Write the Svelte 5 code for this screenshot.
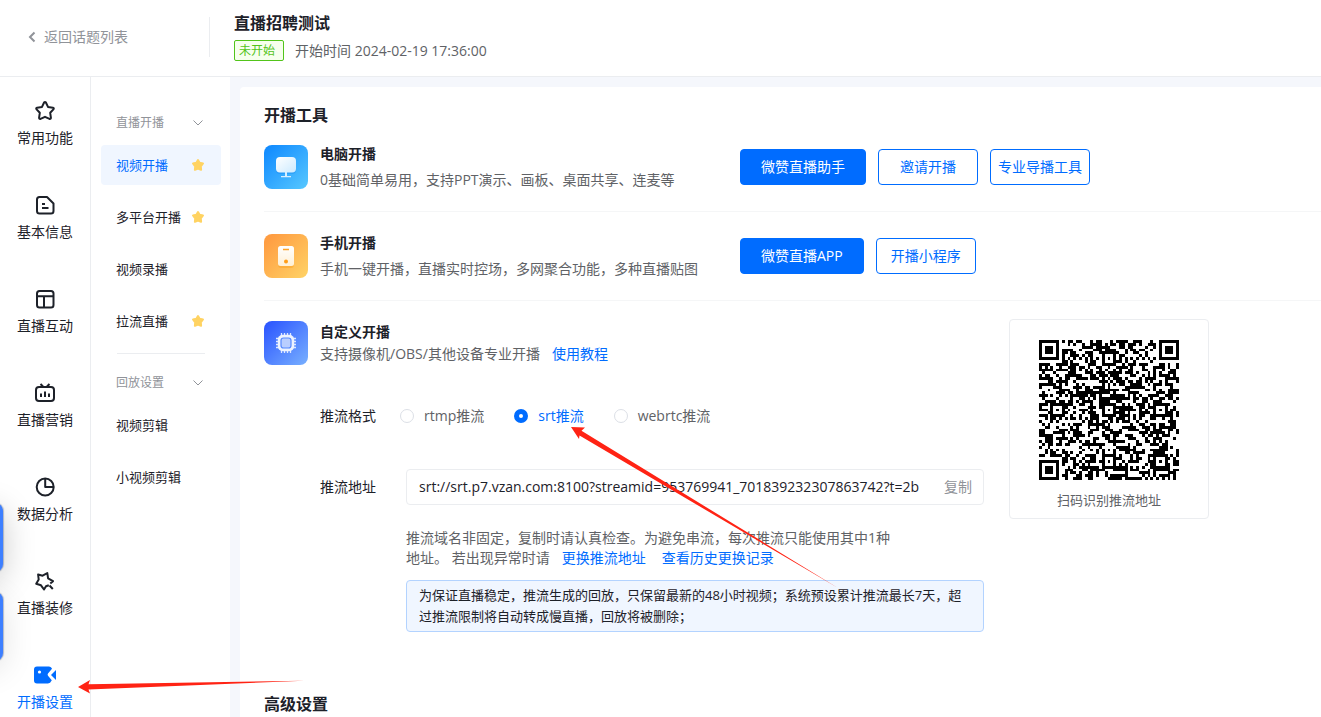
<script>
  const mainNav = [
    { label: '常用功能', icon: 'star' },
    { label: '基本信息', icon: 'doc' },
    { label: '直播互动', icon: 'layout' },
    { label: '直播营销', icon: 'chart' },
    { label: '数据分析', icon: 'pie' },
    { label: '直播装修', icon: 'magic' },
    { label: '开播设置', icon: 'camera', active: true }
  ];

  const groups = [
    {
      title: '直播开播',
      items: [
        { label: '视频开播', star: true, active: true },
        { label: '多平台开播', star: true },
        { label: '视频录播' },
        { label: '拉流直播', star: true }
      ]
    },
    { title: '回放设置', items: [{ label: '视频剪辑' }, { label: '小视频剪辑' }] }
  ];

  const formats = [
    { value: 'rtmp', label: 'rtmp推流' },
    { value: 'srt', label: 'srt推流' },
    { value: 'webrtc', label: 'webrtc推流' }
  ];

  let format = $state('srt');
  let address = $state('srt://srt.p7.vzan.com:8100?streamid=953769941_701839232307863742?t=2b');

  const QR_SIZE = 49;

  // Builds the module grid: finder, timing and alignment patterns over a seeded data area.
  function buildQr(size) {
    let seed = 20240219;
    const rand = () => {
      seed = (seed * 1664525 + 1013904223) >>> 0;
      return seed / 4294967296;
    };
    const grid = Array.from({ length: size }, () => Array.from({ length: size }, () => rand() < 0.5));
    const ring = (cx, cy, reach, light) => {
      for (let y = -reach; y <= reach; y++) {
        for (let x = -reach; x <= reach; x++) {
          const row = grid[cy + y];
          if (row && cx + x >= 0 && cx + x < size) {
            row[cx + x] = !light.includes(Math.max(Math.abs(x), Math.abs(y)));
          }
        }
      }
    };
    for (let i = 8; i < size - 8; i++) {
      grid[6][i] = i % 2 === 0;
      grid[i][6] = i % 2 === 0;
    }
    for (const [x, y] of [[24, 6], [6, 24], [24, 24], [42, 24], [24, 42], [42, 42]]) ring(x, y, 2, [1]);
    for (const [x, y] of [[3, 3], [size - 4, 3], [3, size - 4]]) ring(x, y, 4, [2, 4]);
    let d = '';
    grid.forEach((row, y) => {
      let x = 0;
      while (x < size) {
        if (!row[x]) { x++; continue; }
        const start = x;
        while (x < size && row[x]) x++;
        d += `M${start} ${y}h${x - start}v1h${start - x}z`;
      }
    });
    return d;
  }

  const qrPath = buildQr(QR_SIZE);
</script>

<div class="page">
  <header class="topbar">
    <a class="back" href="#list">
      <svg width="8" height="12" viewBox="0 0 8 12" aria-hidden="true"><path d="M6.5 1.500 2 6l4.500 4.500" fill="none" stroke="currentColor" stroke-width="2" /></svg>
      返回话题列表
    </a>
    <div class="topic">
      <h1>直播招聘测试</h1>
      <div class="meta">
        <span class="tag">未开始</span>
        <span class="time">开始时间 2024-02-19 17:36:00</span>
      </div>
    </div>
  </header>

  <div class="body">
    <nav class="main-nav">
      {#each mainNav as item}
        <a href="#{item.icon}" class:active={item.active}>
          <svg width="22" height="22" viewBox="0 0 22 22" fill="none" stroke="currentColor" stroke-width="2" stroke-linejoin="round" aria-hidden="true">
            {#if item.icon === 'star'}
              <path d="M10.100 2.500Q11 1.400 11.900 2.500L14 6.900l4.900.8q1.500.5.500 1.700l-3.200 3.400.7 4.900q0 1.500-1.400 1.200L11 16.800l-4.500 2.100q-1.400.3-1.400-1.200l.7-4.900-3.200-3.400q-1-1.200.5-1.700L8 6.900z" />
            {:else if item.icon === 'doc'}
              <path d="M5.500 3H13l6.500 6.500v7.500q0 2.500-2.500 2.500H5.500Q3 19.500 3 17V5.500Q3 3 5.500 3z" /><path d="M8 10h3M8 14h6.500" />
            {:else if item.icon === 'layout'}
              <rect x="3" y="3" width="16.500" height="16.500" rx="2.500" /><path d="M3 8.200h16.500M10 8.200v11" />
            {:else if item.icon === 'chart'}
              <rect x="2" y="5" width="18" height="14" rx="3" /><path d="m6.500 2 2.500 2.500M15.500 2 13 4.500M7 11.500V15M11 9.500V15M15 11.500V15" />
            {:else if item.icon === 'pie'}
              <circle cx="11.200" cy="11" r="8.500" /><path d="M11.200 2.500V11h8.500" />
            {:else if item.icon === 'magic'}
              <path d="M14.800 15.200 12 16.300l-2 3.200-3-4.200-4.800-1.500 2.500-4.300-.6-5 4.500 1.200 4.700-2.600.8 5.300 4.900 2.800-2.700 2.300M15.500 15.500l3.300 3.500" />
            {:else}
              <path d="M3 2.500h12q1.800 0 2.600 1.500l.4.700L14 9.500q-.8 1.100 0 2.200l3.800 4.500-.5.900q-.8 2.400-3.300 2.400H3q-3 0-3-3V5.500q0-3 3-3z" fill="currentColor" stroke="none" />
              <path d="M22 6v10l-5-5z" fill="currentColor" stroke="none" /><circle cx="5.500" cy="8" r="1.600" fill="#fff" stroke="none" />
            {/if}
          </svg>
          <span>{item.label}</span>
        </a>
      {/each}
    </nav>

    <nav class="sub-nav">
      {#each groups as group}
        <section>
          <button class="group-title">
            {group.title}
            <svg width="12" height="8" viewBox="0 0 12 8" aria-hidden="true"><path d="m1.500 1.500 4.500 4.500 4.500-4.500" fill="none" stroke="currentColor" /></svg>
          </button>
          {#each group.items as item}
            <a href="#{item.label}" class:active={item.active}>
              {item.label}
              {#if item.star}
                <svg width="14" height="14" viewBox="0 0 14 14" aria-hidden="true"><path d="m7 2 1.600 2.800 3.400.7-2.200 2.800.3 3.500L7 10.500l-3.100 1.300.3-3.500L2 5.500l3.400-.7z" fill="#ffd362" stroke="#ffd362" stroke-width="2" stroke-linejoin="round" /></svg>
              {/if}
            </a>
          {/each}
        </section>
      {/each}
    </nav>

    <main>
      <h2>开播工具</h2>

      <section class="tool">
        <div class="info">
          <svg class="badge" viewBox="0 0 44 44" aria-hidden="true">
            <defs>
              <linearGradient id="pc" x1="0" y1="0" x2="1" y2="1"><stop offset="0" stop-color="#0d87ff" /><stop offset="1" stop-color="#57c8ff" /></linearGradient>
              <linearGradient id="screen" x1="0" y1="0" x2="1" y2="1"><stop offset="0" stop-color="#fff" /><stop offset="1" stop-color="#cceaff" /></linearGradient>
            </defs>
            <rect width="44" height="44" rx="8" fill="url(#pc)" />
            <rect x="12" y="14" width="20" height="15" rx="4" fill="#0879e8" opacity=".25" />
            <path d="M21 27h2v4h4v1.300H17V31h4z" fill="#d9efff" />
            <rect x="12" y="12" width="20" height="15.500" rx="4" fill="url(#screen)" />
          </svg>
          <div>
            <h3>电脑开播</h3>
            <p>0基础简单易用，支持PPT演示、画板、桌面共享、连麦等</p>
          </div>
        </div>
        <div class="actions">
          <button class="btn primary">微赞直播助手</button>
          <button class="btn">邀请开播</button>
          <button class="btn">专业导播工具</button>
        </div>
      </section>

      <section class="tool">
        <div class="info">
          <svg class="badge" viewBox="0 0 44 44" aria-hidden="true">
            <defs>
              <linearGradient id="phone" x1="0" y1="0" x2="1" y2="1"><stop offset=".1" stop-color="#ff9d42" /><stop offset="1" stop-color="#ffd366" /></linearGradient>
              <linearGradient id="handset" x1="0" y1="0" x2="0" y2="1"><stop offset="0" stop-color="#fff" /><stop offset="1" stop-color="#fff0d5" /></linearGradient>
            </defs>
            <rect width="44" height="44" rx="8" fill="url(#phone)" />
            <rect x="14" y="14" width="16" height="20" rx="3" fill="#f89100" opacity=".3" />
            <rect x="14" y="12" width="16" height="20" rx="2.500" fill="url(#handset)" />
            <path d="M19 15.500h6" stroke="#ffa327" stroke-width="1.500" /><circle cx="22" cy="27.500" r="2" fill="#ff9d18" />
          </svg>
          <div>
            <h3>手机开播</h3>
            <p>手机一键开播，直播实时控场，多网聚合功能，多种直播贴图</p>
          </div>
        </div>
        <div class="actions">
          <button class="btn primary">微赞直播APP</button>
          <button class="btn">开播小程序</button>
        </div>
      </section>

      <section class="custom">
        <svg class="badge" viewBox="0 0 44 44" aria-hidden="true">
          <defs>
            <linearGradient id="chip" x1="0" y1="0" x2="1" y2="1"><stop offset="0" stop-color="#2952ff" /><stop offset="1" stop-color="#78b0ff" /></linearGradient>
          </defs>
          <rect width="44" height="44" rx="8" fill="url(#chip)" />
          <path d="M17.500 12v20M20.500 12v20M23.500 12v20M26.500 12v20M12 17.500h20M12 20.500h20M12 23.500h20M12 26.500h20" stroke="#dfe9ff" stroke-width="1.300" />
          <rect x="13.800" y="13.800" width="16.400" height="16.400" rx="5" fill="#edf3ff" />
          <rect x="17" y="17" width="10" height="10" rx="2.500" fill="#b9ceff" stroke="#578aff" stroke-width="1.200" />
        </svg>

        <div class="stream">
          <h3>自定义开播</h3>
          <p class="intro">支持摄像机/OBS/其他设备专业开播<a href="#guide">使用教程</a></p>

          <div class="formats" role="radiogroup" aria-labelledby="format-label">
            <span id="format-label" class="label">推流格式</span>
            {#each formats as option}
              <label class:checked={format === option.value}>
                <input type="radio" name="format" value={option.value} bind:group={format} />
                {option.label}
              </label>
            {/each}
          </div>

          <div class="address">
            <label for="address">推流地址</label>
            <div class="field">
              <input id="address" type="text" readonly bind:value={address} />
              <button>复制</button>
            </div>
          </div>

          <div class="details">
            <p class="hint">推流域名非固定，复制时请认真检查。为避免串流，每次推流只能使用其中1种地址。 若出现异常时请<a href="#replace">更换推流地址</a><a href="#history">查看历史更换记录</a></p>
            <p class="notice">为保证直播稳定，推流生成的回放，只保留最新的48小时视频；系统预设累计推流最长7天，超过推流限制将自动转成慢直播，回放将被删除；</p>
          </div>
        </div>

        <figure>
          <svg class="qr" viewBox="0 0 {QR_SIZE} {QR_SIZE}" shape-rendering="crispEdges" role="img" aria-labelledby="qr-caption"><path d={qrPath} /></svg>
          <figcaption id="qr-caption">扫码识别推流地址</figcaption>
        </figure>
      </section>

      <h2 class="advanced">高级设置</h2>
    </main>
  </div>

  <div class="dock"><span></span><span></span></div>

  <svg class="arrow to-format" viewBox="0 0 268 162" aria-hidden="true"><path d="M0 0 14 .5l-3.500 3.200L267 161 8.500 8.500 8 12z" /></svg>
  <svg class="arrow to-nav" viewBox="0 0 226 14" aria-hidden="true"><path d="M0 7 12 0l-1.500 4.200L226 .8 10.500 9.500 12 13.500z" /></svg>
</div>

<style>
  :global(body) {
    margin: 0;
    background: #fff;
  }

  .page {
    position: relative;
    display: flex;
    flex-direction: column;
    height: 100vh;
    overflow: hidden;
    color: #1d2129;
    font: 14px/20px "Open Sans", "Noto Sans CJK SC", sans-serif;
  }

  .page :is(h1, h2, h3, p, figure) { margin: 0; }
  .page a { color: #006cff; text-decoration: none; }
  .page :is(button, input) { font: inherit; }
  .page button { cursor: pointer; white-space: nowrap; }

  .topbar {
    display: flex;
    align-items: center;
    flex: none;
    height: 76px;
    border-bottom: 1px solid #ebedf0;
  }

  .page .back {
    display: flex;
    align-items: center;
    gap: 8px;
    box-sizing: border-box;
    width: 210px;
    height: 40px;
    margin-bottom: 2px;
    padding-left: 28px;
    border-right: 1px solid #ebedf0;
    color: #909399;
  }

  .topic { padding: 0 0 4px 24px; }
  .topic h1 { font-size: 16px; line-height: 24px; margin-bottom: 5px; }
  .meta { display: flex; align-items: center; gap: 11px; color: #606266; }
  .time { line-height: 18px; }

  .tag {
    padding: 0 8px 0 4px;
    border: 1px solid #52c41a;
    border-radius: 2px;
    background: #f6ffed;
    color: #52c41a;
    font-size: 12px;
    line-height: 19px;
  }

  .body { display: flex; flex: 1; min-height: 0; background: #f5f7fc; }

  .main-nav {
    display: flex;
    flex-direction: column;
    flex: none;
    width: 90px;
    background: #fff;
    border-right: 1px solid #ebedf0;
  }

  .page .main-nav a {
    display: flex;
    flex-direction: column;
    align-items: center;
    gap: 6px;
    padding: 23px 0;
    color: #1d2129;
  }

  .page .main-nav a.active { color: #006cff; }

  .sub-nav {
    flex: none;
    box-sizing: border-box;
    width: 139px;
    padding: 28px 9px 0 10px;
    background: #fff;
    font-size: 13px;
  }

  .sub-nav section { display: flex; flex-direction: column; gap: 12px; }

  .sub-nav section + section::before {
    content: "";
    height: 1px;
    margin: 12px 16px -1px;
    background: #ebedf0;
  }

  .page .sub-nav .group-title {
    display: flex;
    align-items: center;
    justify-content: space-between;
    height: 36px;
    margin-bottom: -8px;
    padding: 0 17px 0 15px;
    border: 0;
    background: none;
    color: #909399;
    font-size: 12px;
  }

  .page .sub-nav a {
    display: flex;
    align-items: center;
    justify-content: space-between;
    height: 40px;
    padding: 0 16px 0 15px;
    border-radius: 4px;
    color: #1d2129;
    white-space: nowrap;
  }

  .page .sub-nav a.active { background: #f0f6ff; color: #006cff; }

  main {
    flex: 1;
    min-width: 0;
    margin: 10px 0 0 10px;
    padding: 20px 0 0 24px;
    border-radius: 4px 0 0 0;
    background: #fff;
  }

  h2 { font-size: 16px; line-height: 16px; }
  h3 { font-size: 14px; line-height: 20px; }

  .tool {
    display: flex;
    align-items: center;
    height: 88px;
    border-bottom: 1px solid #f5f6f7;
  }

  .info { display: flex; align-items: center; gap: 12px; flex: 0 0 476px; }
  .page .info p { margin-top: 6px; color: #606266; }
  .badge { flex: none; width: 44px; height: 44px; }
  .actions { display: flex; gap: 12px; }

  .btn {
    min-width: 100px;
    height: 36px;
    padding: 0 7px;
    border: 1px solid #006cff;
    border-radius: 4px;
    background: #fff;
    color: #006cff;
  }

  .btn.primary { padding: 0 20px; background: #006cff; color: #fff; }

  .custom { display: flex; align-items: flex-start; padding-top: 20px; }
  .stream { flex: 0 0 664px; margin-left: 12px; }
  .stream h3, .intro { line-height: 22px; }
  .intro { color: #606266; }
  .intro a { margin-left: 12px; }

  .formats { display: flex; align-items: center; gap: 30px; margin-top: 41px; color: #606266; }
  .formats .label { width: 50px; color: #1d2129; white-space: nowrap; }
  .formats label { display: flex; align-items: center; gap: 10px; }
  .formats .checked { color: #006cff; }

  .formats input {
    appearance: none;
    width: 14px;
    height: 14px;
    margin: 0;
    border: 1px solid #dcdfe6;
    border-radius: 50%;
    background: #fff;
  }

  .formats input:checked { border: 5px solid #006cff; }

  .address { display: flex; align-items: center; gap: 30px; margin-top: 43px; }

  .field {
    display: flex;
    flex: 1;
    box-sizing: border-box;
    height: 36px;
    min-width: 0;
    padding: 0 11px 0 12px;
    border: 1px solid #ebedf0;
    border-radius: 4px;
    gap: 10px;
  }

  .field input {
    flex: 1;
    min-width: 0;
    padding: 0;
    border: 0;
    outline: 0;
    background: none;
    color: #1d2129;
  }

  .field button { padding: 0; border: 0; background: none; color: #909399; }

  .details { margin-left: 86px; }
  .page .hint { max-width: 490px; margin-top: 23px; color: #606266; }
  .hint a { margin-left: 12px; }
  .hint a + a { margin-left: 16px; }

  .page .notice {
    margin-top: 12px;
    padding: 4px 12px;
    border: 1px solid #b3d3ff;
    border-radius: 4px;
    background: #f0f6ff;
    font-size: 13px;
    line-height: 21px;
  }

  .page figure {
    display: flex;
    flex-direction: column;
    align-items: center;
    flex: none;
    box-sizing: border-box;
    width: 200px;
    height: 200px;
    margin: -2px 0 0 25px;
    padding-top: 20px;
    border: 1px solid #ebedf0;
    border-radius: 4px;
    color: #606266;
    font-size: 13px;
  }

  .qr { width: 140px; height: 140px; margin-bottom: 10px; }

  .page .advanced { margin-top: 64px; }

  .dock {
    position: absolute;
    left: -40px;
    top: 503px;
    display: flex;
    flex-direction: column;
    gap: 20px;
  }

  .dock span {
    width: 43px;
    height: 69px;
    border-radius: 8px;
    background: #3d7fff;
    box-shadow: 0 0 1px 1px rgb(80 100 140 / 40%), 0 8px 32px rgb(0 0 0 / 22%);
  }

  .dock span + span { box-shadow: 0 0 1px 1px rgb(80 100 140 / 40%), 0 8px 32px rgb(0 0 0 / 12%); }

  .arrow { position: absolute; fill: #ff2314; pointer-events: none; }
  .to-format { left: 571px; top: 427px; width: 268px; height: 162px; }
  .to-nav { left: 78px; top: 680px; width: 226px; height: 14px; }
</style>
